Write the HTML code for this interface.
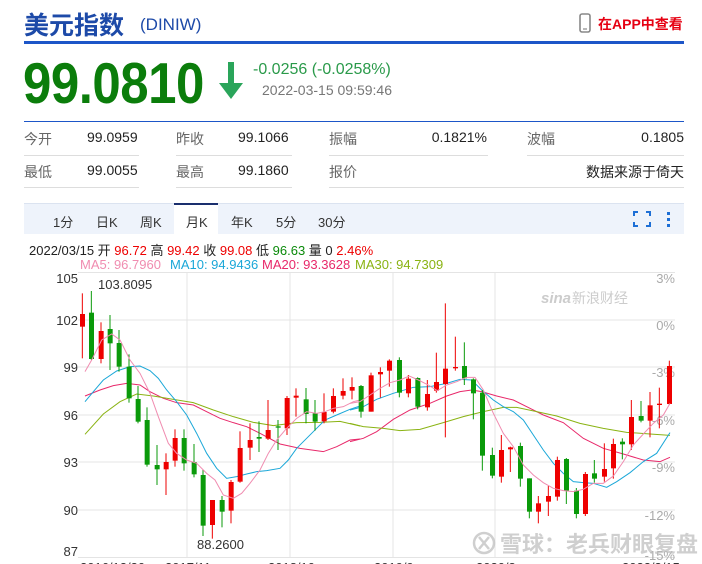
<!DOCTYPE html>
<html><head><meta charset="utf-8"><style>
*{margin:0;padding:0;box-sizing:border-box}
body{width:702px;height:564px;overflow:hidden;background:#fff;font-family:"Liberation Sans","Noto Sans CJK SC",sans-serif;position:relative;color:#333}
.a{position:absolute;white-space:nowrap}
.lab{font-size:14px;color:#666}
.val{font-size:14px;color:#222}
.sep{position:absolute;height:1px;background:#ddd}
.tab{position:absolute;top:212px;font-size:13px;color:#333}
</style></head><body>
<div class="a" style="left:24px;top:6px;font-size:25px;font-weight:bold;color:#1d4aa8;letter-spacing:0px">美元指数</div>
<div class="a" style="left:140px;top:15px;font-size:17px;color:#1d4aa8">(DINIW)</div>
<svg class="a" style="left:579px;top:13px" width="12" height="20"><rect x="1" y="1" width="10" height="18" rx="2" fill="none" stroke="#888" stroke-width="1.6"/><line x1="4" y1="16" x2="8" y2="16" stroke="#888" stroke-width="1.2"/></svg>
<div class="a" style="left:598px;top:14px;font-size:14px;font-weight:bold;color:#e60012">在APP中查看</div>
<div class="a" style="left:24px;top:41px;width:660px;height:3px;background:#1d56c8"></div>

<div class="a" style="left:23px;top:52px;font-size:51px;font-weight:bold;color:#0b7d0b;letter-spacing:-0.5px;transform:scaleY(1.13);transform-origin:0 0;line-height:1.1">99.0810</div>
<svg class="a" style="left:218px;top:61px" width="26" height="40"><rect x="10" y="1" width="6" height="24" fill="#2aa55a"/><polygon points="1,22 25,22 13,38" fill="#2aa55a"/></svg>
<div class="a" style="left:253px;top:61px;font-size:16px;color:#2a9a4a">-0.0256 (-0.0258%)</div>
<div class="a" style="left:262px;top:82px;font-size:14px;color:#777">2022-03-15 09:59:46</div>
<div class="a" style="left:24px;top:121px;width:660px;height:1px;background:#1d56c8"></div>

<div class="a lab" style="left:24px;top:129px">今开</div><div class="a val" style="left:87px;top:129px">99.0959</div>
<div class="a lab" style="left:176px;top:129px">昨收</div><div class="a val" style="left:238px;top:129px">99.1066</div>
<div class="a lab" style="left:329px;top:129px">振幅</div><div class="a val" style="right:215px;top:129px">0.1821%</div>
<div class="a lab" style="left:527px;top:129px">波幅</div><div class="a val" style="right:18px;top:129px">0.1805</div>
<div class="sep" style="left:24px;top:155px;width:115px"></div><div class="sep" style="left:176px;top:155px;width:116px"></div><div class="sep" style="left:329px;top:155px;width:159px"></div><div class="sep" style="left:527px;top:155px;width:157px"></div>
<div class="a lab" style="left:24px;top:162px">最低</div><div class="a val" style="left:87px;top:162px">99.0055</div>
<div class="a lab" style="left:176px;top:162px">最高</div><div class="a val" style="left:238px;top:162px">99.1860</div>
<div class="a lab" style="left:329px;top:162px">报价</div><div class="a val" style="right:18px;top:162px">数据来源于倚天</div>
<div class="sep" style="left:24px;top:187px;width:115px"></div><div class="sep" style="left:176px;top:187px;width:116px"></div><div class="sep" style="left:329px;top:187px;width:355px"></div>

<div class="a" style="left:24px;top:203px;width:660px;height:31px;background:#eef3fb;border-top:1px solid #dbe3f0"></div>
<div class="a" style="left:174px;top:203px;width:44px;height:32px;background:#fff;border-top:2px solid #1a2f6e"></div>
<div class="tab" style="left:53px">1分</div><div class="tab" style="left:96px">日K</div><div class="tab" style="left:140px">周K</div><div class="tab" style="left:186px">月K</div><div class="tab" style="left:231px">年K</div><div class="tab" style="left:276px">5分</div><div class="tab" style="left:318px">30分</div>
<svg class="a" style="left:632px;top:210px" width="40" height="18"><path d="M2 6V2H6M14 2H18V6M18 12V16H14M6 16H2V12" fill="none" stroke="#1d6fd6" stroke-width="2"/><rect x="35" y="2" width="3" height="3" fill="#1d6fd6"/><rect x="35" y="8" width="3" height="3" fill="#1d6fd6"/><rect x="35" y="14" width="3" height="3" fill="#1d6fd6"/></svg>

<div class="a" style="left:29px;top:240px;font-size:13px;color:#222">2022/03/15 开 <span style="color:#e00">96.72</span> 高 <span style="color:#e00">99.42</span> 收 <span style="color:#e00">99.08</span> 低 <span style="color:#0a8a0a">96.63</span> 量 0 <span style="color:#e00">2.46%</span></div>
<div class="a" style="left:80px;top:257px;font-size:13px;color:#f08cb0">MA5: 96.7960</div>
<div class="a" style="left:170px;top:257px;font-size:13px;color:#1aa7d8">MA10: 94.9436</div>
<div class="a" style="left:262px;top:257px;font-size:13px;color:#e8286a">MA20: 93.3628</div>
<div class="a" style="left:355px;top:257px;font-size:13px;color:#8ab313">MA30: 94.7309</div>

<svg class="a" style="left:0;top:0" width="702" height="564" font-family="Liberation Sans,sans-serif">
<g stroke="#e4e4e4" stroke-width="1">
<line x1="78" y1="272.5" x2="675" y2="272.5"/><line x1="78" y1="320" x2="675" y2="320"/><line x1="78" y1="367" x2="675" y2="367"/><line x1="78" y1="415" x2="675" y2="415"/><line x1="78" y1="462" x2="675" y2="462"/><line x1="78" y1="510" x2="675" y2="510"/><line x1="78" y1="557.5" x2="675" y2="557.5"/>
<line x1="187" y1="272" x2="187" y2="558"/><line x1="290" y1="272" x2="290" y2="558"/><line x1="393" y1="272" x2="393" y2="558"/><line x1="495" y1="272" x2="495" y2="558"/>
</g>
<g font-size="13" fill="#333" text-anchor="end">
<text x="78" y="283">105</text><text x="78" y="325">102</text><text x="78" y="372">99</text><text x="78" y="420">96</text><text x="78" y="467">93</text><text x="78" y="515">90</text><text x="78" y="556">87</text>
</g>
<g font-size="13" fill="#aaa" text-anchor="end">
<text x="675" y="283">3%</text><text x="675" y="330">0%</text><text x="675" y="377">-3%</text><text x="675" y="425">-6%</text><text x="675" y="472">-9%</text><text x="675" y="520">-12%</text><text x="675" y="560">-15%</text>
</g>
<g font-size="13" fill="#333"><text x="98" y="289">103.8095</text><text x="197" y="549">88.2600</text></g>
<g font-size="13" fill="#333"><text x="80" y="572">2016/12/30</text><text x="165" y="572">2017/11</text><text x="268" y="572">2018/10</text><text x="374" y="572">2019/9</text><text x="476" y="572">2020/8</text><text x="622" y="572">2022/3/15</text></g>
<text x="541" y="303" font-size="15" font-style="italic" font-weight="bold" fill="#ccc">sina</text><text x="572" y="303" font-size="14" fill="#ccc" font-family="Noto Sans CJK SC,sans-serif">新浪财经</text>

<g transform="translate(20,260) scale(0.33333)" stroke-linecap="butt">
<g fill="none" stroke-width="3">
<polyline stroke="#e8286a" points="195,408 240,390 280,377 320,370 360,375 390,395 430,415 470,428 520,435 560,455 600,475 640,488 680,500 720,520 780,552 840,565 910,575 950,560 990,540 1020,537"/>
<polyline stroke="#8ab313" points="195,523 250,462 300,425 350,402 400,408 460,418 520,428 580,450 640,470 700,487 760,497 830,488 900,487 960,484 1020,498"/>
<polyline stroke="#1aa7d8" points="195,425 220,395 250,360 290,333 330,320 360,318 390,332 415,355 440,390 470,425 500,465 530,520 560,580 590,625 620,655 650,650 680,642 710,635 740,632 780,625 805,600 830,565 860,535 890,505 915,480 950,465 990,448 1020,438"/>
</g>
</g>
<g transform="translate(20,260) scale(0.33333)">
<g stroke-width="3">
<line x1="187" y1="100" x2="187" y2="295" stroke="#e00"/><rect x="180" y="162" width="15" height="38" fill="#e00"/>
<line x1="214" y1="93" x2="214" y2="300" stroke="#0a9a0a"/><rect x="207" y="158" width="15" height="139" fill="#0a9a0a"/>
<line x1="243" y1="187" x2="243" y2="310" stroke="#e00"/><rect x="236" y="213" width="15" height="84" fill="#e00"/>
<line x1="270" y1="165" x2="270" y2="330" stroke="#0a9a0a"/><rect x="263" y="207" width="15" height="43" fill="#0a9a0a"/>
<line x1="297" y1="210" x2="297" y2="335" stroke="#0a9a0a"/><rect x="290" y="249" width="15" height="71" fill="#0a9a0a"/>
<line x1="327" y1="283" x2="327" y2="428" stroke="#0a9a0a"/><rect x="320" y="320" width="15" height="95" fill="#0a9a0a"/>
<line x1="354" y1="378" x2="354" y2="490" stroke="#0a9a0a"/><rect x="347" y="417" width="15" height="68" fill="#0a9a0a"/>
<line x1="381" y1="442" x2="381" y2="620" stroke="#0a9a0a"/><rect x="374" y="480" width="15" height="134" fill="#0a9a0a"/>
<line x1="411" y1="555" x2="411" y2="675" stroke="#0a9a0a"/><rect x="404" y="615" width="15" height="13" fill="#0a9a0a"/>
<line x1="438" y1="580" x2="438" y2="705" stroke="#e00"/><rect x="431" y="606" width="15" height="22" fill="#e00"/>
<line x1="465" y1="508" x2="465" y2="620" stroke="#e00"/><rect x="458" y="534" width="15" height="68" fill="#e00"/>
<line x1="492" y1="508" x2="492" y2="632" stroke="#0a9a0a"/><rect x="485" y="534" width="15" height="76" fill="#0a9a0a"/>
<line x1="522" y1="552" x2="522" y2="652" stroke="#0a9a0a"/><rect x="515" y="606" width="15" height="37" fill="#0a9a0a"/>
<line x1="549" y1="630" x2="549" y2="828" stroke="#0a9a0a"/><rect x="542" y="645" width="15" height="152" fill="#0a9a0a"/>
<line x1="577" y1="720" x2="577" y2="836" stroke="#e00"/><rect x="570" y="720" width="15" height="75" fill="#e00"/>
<line x1="606" y1="708" x2="606" y2="802" stroke="#0a9a0a"/><rect x="599" y="720" width="15" height="35" fill="#0a9a0a"/>
<line x1="633" y1="660" x2="633" y2="790" stroke="#e00"/><rect x="626" y="666" width="15" height="86" fill="#e00"/>
<line x1="660" y1="514" x2="660" y2="668" stroke="#e00"/><rect x="653" y="564" width="15" height="101" fill="#e00"/>
<line x1="690" y1="490" x2="690" y2="600" stroke="#e00"/><rect x="683" y="540" width="15" height="23" fill="#e00"/>
<line x1="717" y1="484" x2="717" y2="576" stroke="#0a9a0a"/><rect x="710" y="531" width="15" height="5" fill="#0a9a0a"/>
<line x1="744" y1="420" x2="744" y2="540" stroke="#e00"/><rect x="737" y="510" width="15" height="26" fill="#e00"/>
<line x1="774" y1="480" x2="774" y2="570" stroke="#0a9a0a"/><rect x="767" y="499" width="15" height="4" fill="#0a9a0a"/>
<line x1="801" y1="408" x2="801" y2="525" stroke="#e00"/><rect x="794" y="414" width="15" height="91" fill="#e00"/>
<line x1="828" y1="385" x2="828" y2="470" stroke="#e00"/><rect x="821" y="407" width="15" height="6" fill="#e00"/>
<line x1="858" y1="384" x2="858" y2="490" stroke="#0a9a0a"/><rect x="851" y="418" width="15" height="44" fill="#0a9a0a"/>
<line x1="885" y1="420" x2="885" y2="512" stroke="#0a9a0a"/><rect x="878" y="460" width="15" height="25" fill="#0a9a0a"/>
<line x1="912" y1="400" x2="912" y2="490" stroke="#e00"/><rect x="905" y="456" width="15" height="28" fill="#e00"/>
<line x1="940" y1="385" x2="940" y2="460" stroke="#e00"/><rect x="933" y="408" width="15" height="47" fill="#e00"/>
<line x1="969" y1="355" x2="969" y2="418" stroke="#e00"/><rect x="962" y="393" width="15" height="14" fill="#e00"/>
<line x1="996" y1="352" x2="996" y2="418" stroke="#e00"/><rect x="989" y="381" width="15" height="11" fill="#e00"/>
</g>
<polyline fill="none" stroke="#f08cb0" stroke-width="3" points="195,335 215,300 245,240 275,222 300,240 330,300 360,340 390,400 415,470 445,550 470,580 500,600 530,610 560,640 585,660 610,705 640,715 665,700 690,670 720,630 745,580 770,540 800,505 830,475 860,455 890,460 915,455 940,445 970,440 1000,425 1020,420"/>
</g>

<g transform="translate(350,260) scale(0.33333)">
<g fill="none" stroke-width="3">
<polyline stroke="#e8286a" points="0,545 40,535 80,515 130,478 180,450 240,430 290,408 330,395 365,390 395,395 440,408 490,420 540,445 580,465 640,488 700,535 760,565 820,582 880,600 930,605 960,592"/>
<polyline stroke="#8ab313" points="0,490 40,500 100,505 150,512 210,508 280,488 340,470 400,455 460,442 500,442 560,455 620,468 690,490 760,505 830,517 900,522 960,526"/>
<polyline stroke="#1aa7d8" points="0,450 40,440 80,418 130,400 190,382 240,380 290,370 330,358 365,360 395,390 430,420 460,440 490,455 520,480 550,525 580,570 610,610 640,640 670,665 700,668 730,670 770,682 800,665 840,638 880,605 920,580 960,518"/>
</g>
<g stroke-width="3">
<line x1="33" y1="375" x2="33" y2="473" stroke="#0a9a0a"/><rect x="26" y="378" width="15" height="77" fill="#0a9a0a"/>
<line x1="63" y1="338" x2="63" y2="455" stroke="#e00"/><rect x="56" y="346" width="15" height="109" fill="#e00"/>
<line x1="91" y1="322" x2="91" y2="413" stroke="#e00"/><rect x="84" y="336" width="15" height="7" fill="#e00"/>
<line x1="118" y1="298" x2="118" y2="380" stroke="#e00"/><rect x="111" y="302" width="15" height="30" fill="#e00"/>
<line x1="148" y1="292" x2="148" y2="412" stroke="#0a9a0a"/><rect x="141" y="300" width="15" height="98" fill="#0a9a0a"/>
<line x1="175" y1="345" x2="175" y2="412" stroke="#e00"/><rect x="168" y="356" width="15" height="44" fill="#e00"/>
<line x1="203" y1="352" x2="203" y2="448" stroke="#0a9a0a"/><rect x="196" y="354" width="15" height="86" fill="#0a9a0a"/>
<line x1="232" y1="360" x2="232" y2="452" stroke="#e00"/><rect x="225" y="402" width="15" height="40" fill="#e00"/>
<line x1="259" y1="278" x2="259" y2="398" stroke="#e00"/><rect x="252" y="366" width="15" height="26" fill="#e00"/>
<line x1="286" y1="130" x2="286" y2="532" stroke="#e00"/><rect x="279" y="326" width="15" height="46" fill="#e00"/>
<line x1="316" y1="230" x2="316" y2="332" stroke="#e00"/><rect x="309" y="321" width="15" height="4" fill="#e00"/>
<line x1="343" y1="247" x2="343" y2="375" stroke="#0a9a0a"/><rect x="336" y="318" width="15" height="37" fill="#0a9a0a"/>
<line x1="370" y1="355" x2="370" y2="478" stroke="#0a9a0a"/><rect x="363" y="358" width="15" height="42" fill="#0a9a0a"/>
<line x1="397" y1="390" x2="397" y2="632" stroke="#0a9a0a"/><rect x="390" y="398" width="15" height="189" fill="#0a9a0a"/>
<line x1="427" y1="563" x2="427" y2="655" stroke="#0a9a0a"/><rect x="420" y="585" width="15" height="62" fill="#0a9a0a"/>
<line x1="454" y1="525" x2="454" y2="668" stroke="#e00"/><rect x="447" y="570" width="15" height="80" fill="#e00"/>
<line x1="481" y1="560" x2="481" y2="636" stroke="#e00"/><rect x="474" y="562" width="15" height="6" fill="#e00"/>
<line x1="511" y1="548" x2="511" y2="680" stroke="#0a9a0a"/><rect x="504" y="558" width="15" height="98" fill="#0a9a0a"/>
<line x1="538" y1="655" x2="538" y2="775" stroke="#0a9a0a"/><rect x="531" y="655" width="15" height="100" fill="#0a9a0a"/>
<line x1="565" y1="708" x2="565" y2="790" stroke="#e00"/><rect x="558" y="730" width="15" height="25" fill="#e00"/>
<line x1="595" y1="678" x2="595" y2="768" stroke="#e00"/><rect x="588" y="708" width="15" height="17" fill="#e00"/>
<line x1="622" y1="590" x2="622" y2="722" stroke="#e00"/><rect x="615" y="600" width="15" height="110" fill="#e00"/>
<line x1="649" y1="594" x2="649" y2="732" stroke="#0a9a0a"/><rect x="642" y="597" width="15" height="95" fill="#0a9a0a"/>
<line x1="679" y1="684" x2="679" y2="775" stroke="#0a9a0a"/><rect x="672" y="692" width="15" height="70" fill="#0a9a0a"/>
<line x1="706" y1="636" x2="706" y2="768" stroke="#e00"/><rect x="699" y="642" width="15" height="120" fill="#e00"/>
<line x1="733" y1="600" x2="733" y2="668" stroke="#0a9a0a"/><rect x="726" y="640" width="15" height="16" fill="#0a9a0a"/>
<line x1="763" y1="550" x2="763" y2="665" stroke="#e00"/><rect x="756" y="627" width="15" height="23" fill="#e00"/>
<line x1="790" y1="536" x2="790" y2="656" stroke="#e00"/><rect x="783" y="552" width="15" height="73" fill="#e00"/>
<line x1="817" y1="535" x2="817" y2="598" stroke="#0a9a0a"/><rect x="810" y="545" width="15" height="8" fill="#0a9a0a"/>
<line x1="844" y1="420" x2="844" y2="570" stroke="#e00"/><rect x="837" y="471" width="15" height="82" fill="#e00"/>
<line x1="873" y1="423" x2="873" y2="487" stroke="#0a9a0a"/><rect x="866" y="468" width="15" height="14" fill="#0a9a0a"/>
<line x1="900" y1="396" x2="900" y2="532" stroke="#e00"/><rect x="893" y="436" width="15" height="46" fill="#e00"/>
<line x1="928" y1="383" x2="928" y2="505" stroke="#e00"/><rect x="921" y="431" width="15" height="4" fill="#e00"/>
<line x1="958" y1="302" x2="958" y2="435" stroke="#e00"/><rect x="951" y="318" width="15" height="114" fill="#e00"/>
</g>
<polyline fill="none" stroke="#f08cb0" stroke-width="3" points="0,430 30,425 60,405 90,385 120,368 150,360 178,348 205,360 235,375 262,392 290,375 320,365 350,352 375,352 400,390 430,460 460,520 490,560 520,615 550,645 580,668 610,685 640,692 670,695 700,688 730,670 760,670 790,648 820,605 850,555 880,522 910,490 940,465 960,430"/>
</g>

<g opacity="0.7">
<circle cx="484" cy="543" r="10" fill="none" stroke="#bbb" stroke-width="2.5"/>
<path d="M479 537 L489 549 M489 537 L479 549" stroke="#bbb" stroke-width="2.5"/>
<text x="500" y="552" font-size="22" font-family="Noto Sans CJK SC,sans-serif" fill="#bbb" font-weight="bold">雪球：老兵财眼复盘</text>
</g>
</svg>
</body></html>
